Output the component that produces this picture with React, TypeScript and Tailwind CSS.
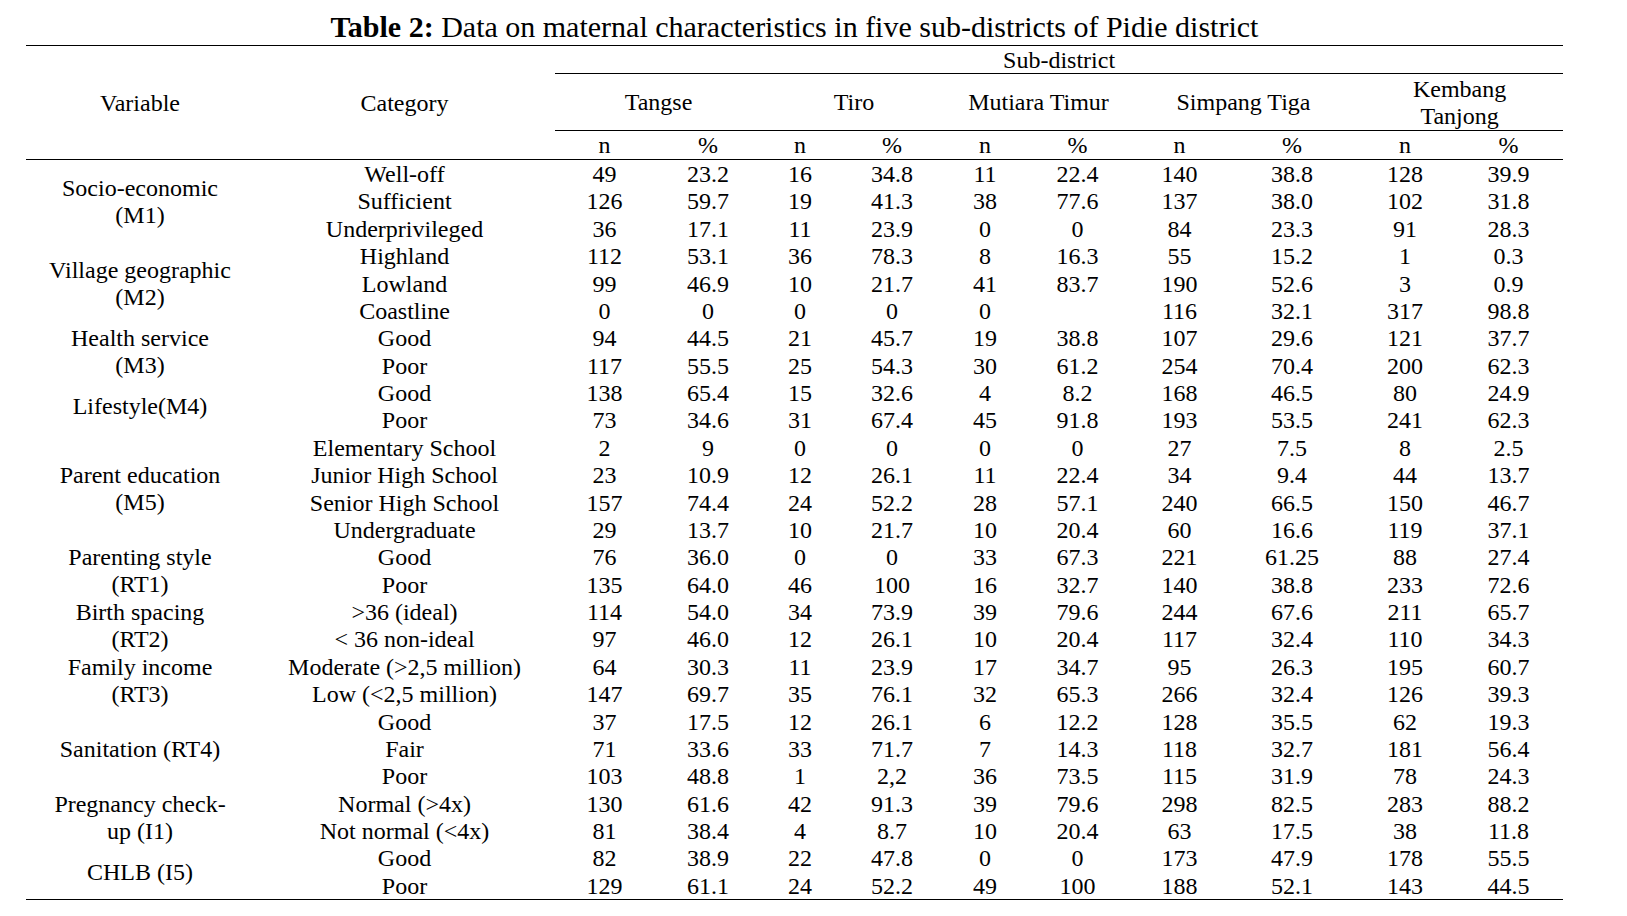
type Group = {
  label: string[];
  rows: string[][];
};

const groups: Group[] = [
  {
    label: ['Socio-economic', '(M1)'],
    rows: [
      ['Well-off', '49', '23.2', '16', '34.8', '11', '22.4', '140', '38.8', '128', '39.9'],
      ['Sufficient', '126', '59.7', '19', '41.3', '38', '77.6', '137', '38.0', '102', '31.8'],
      ['Underprivileged', '36', '17.1', '11', '23.9', '0', '0', '84', '23.3', '91', '28.3'],
    ],
  },
  {
    label: ['Village geographic', '(M2)'],
    rows: [
      ['Highland', '112', '53.1', '36', '78.3', '8', '16.3', '55', '15.2', '1', '0.3'],
      ['Lowland', '99', '46.9', '10', '21.7', '41', '83.7', '190', '52.6', '3', '0.9'],
      ['Coastline', '0', '0', '0', '0', '0', '', '116', '32.1', '317', '98.8'],
    ],
  },
  {
    label: ['Health service', '(M3)'],
    rows: [
      ['Good', '94', '44.5', '21', '45.7', '19', '38.8', '107', '29.6', '121', '37.7'],
      ['Poor', '117', '55.5', '25', '54.3', '30', '61.2', '254', '70.4', '200', '62.3'],
    ],
  },
  {
    label: ['Lifestyle(M4)'],
    rows: [
      ['Good', '138', '65.4', '15', '32.6', '4', '8.2', '168', '46.5', '80', '24.9'],
      ['Poor', '73', '34.6', '31', '67.4', '45', '91.8', '193', '53.5', '241', '62.3'],
    ],
  },
  {
    label: ['Parent education', '(M5)'],
    rows: [
      ['Elementary School', '2', '9', '0', '0', '0', '0', '27', '7.5', '8', '2.5'],
      ['Junior High School', '23', '10.9', '12', '26.1', '11', '22.4', '34', '9.4', '44', '13.7'],
      ['Senior High School', '157', '74.4', '24', '52.2', '28', '57.1', '240', '66.5', '150', '46.7'],
      ['Undergraduate', '29', '13.7', '10', '21.7', '10', '20.4', '60', '16.6', '119', '37.1'],
    ],
  },
  {
    label: ['Parenting style', '(RT1)'],
    rows: [
      ['Good', '76', '36.0', '0', '0', '33', '67.3', '221', '61.25', '88', '27.4'],
      ['Poor', '135', '64.0', '46', '100', '16', '32.7', '140', '38.8', '233', '72.6'],
    ],
  },
  {
    label: ['Birth spacing', '(RT2)'],
    rows: [
      ['>36 (ideal)', '114', '54.0', '34', '73.9', '39', '79.6', '244', '67.6', '211', '65.7'],
      ['< 36 non-ideal', '97', '46.0', '12', '26.1', '10', '20.4', '117', '32.4', '110', '34.3'],
    ],
  },
  {
    label: ['Family income', '(RT3)'],
    rows: [
      ['Moderate (>2,5 million)', '64', '30.3', '11', '23.9', '17', '34.7', '95', '26.3', '195', '60.7'],
      ['Low (<2,5 million)', '147', '69.7', '35', '76.1', '32', '65.3', '266', '32.4', '126', '39.3'],
    ],
  },
  {
    label: ['Sanitation (RT4)'],
    rows: [
      ['Good', '37', '17.5', '12', '26.1', '6', '12.2', '128', '35.5', '62', '19.3'],
      ['Fair', '71', '33.6', '33', '71.7', '7', '14.3', '118', '32.7', '181', '56.4'],
      ['Poor', '103', '48.8', '1', '2,2', '36', '73.5', '115', '31.9', '78', '24.3'],
    ],
  },
  {
    label: ['Pregnancy check-', 'up (I1)'],
    rows: [
      ['Normal (>4x)', '130', '61.6', '42', '91.3', '39', '79.6', '298', '82.5', '283', '88.2'],
      ['Not normal (<4x)', '81', '38.4', '4', '8.7', '10', '20.4', '63', '17.5', '38', '11.8'],
    ],
  },
  {
    label: ['CHLB (I5)'],
    rows: [
      ['Good', '82', '38.9', '22', '47.8', '0', '0', '173', '47.9', '178', '55.5'],
      ['Poor', '129', '61.1', '24', '52.2', '49', '100', '188', '52.1', '143', '44.5'],
    ],
  },
];

const widths = [228, 301, 99, 108, 76, 108, 78, 107, 97, 128, 98, 109];

function App() {
  const total = groups.reduce((n, g) => n + g.rows.length, 0);
  let count = 0;

  return (
    <div className="w-[1627px] h-[916px] bg-white text-black font-['Liberation_Serif',serif] pl-[26px]">
      <div className="w-[1537px] h-[45px] pt-[12px] text-center text-[30px] leading-[30px]">
        <span className="font-bold">Table 2:</span> Data on maternal characteristics in five sub-districts of Pidie district
      </div>
      <table className="table-fixed border-collapse w-[1537px] text-[24px] leading-[27.4px]">
        <colgroup>
          {widths.map((w, i) => (
            <col key={i} style={{ width: w }} />
          ))}
        </colgroup>
        <thead>
          <tr className="h-[28px] border-t border-black">
            <th rowSpan={3} className="font-normal p-0 pt-[3px] align-middle border-b border-black">
              Variable
            </th>
            <th rowSpan={3} className="font-normal p-0 pt-[3px] align-middle border-b border-black">
              Category
            </th>
            <th colSpan={10} className="font-normal p-0 pt-[1px] leading-[26px] border-b border-black">
              Sub-district
            </th>
          </tr>
          <tr className="h-[57px]">
            <th colSpan={2} className="font-normal p-0 pt-[2px] border-b border-black">Tangse</th>
            <th colSpan={2} className="font-normal p-0 pt-[2px] border-b border-black">Tiro</th>
            <th colSpan={2} className="font-normal p-0 pt-[2px] border-b border-black">Mutiara Timur</th>
            <th colSpan={2} className="font-normal p-0 pt-[2px] border-b border-black">Simpang Tiga</th>
            <th colSpan={2} className="font-normal p-0 pt-[1px] border-b border-black leading-[27px]">
              Kembang
              <br />
              Tanjong
            </th>
          </tr>
          <tr className="h-[29px]">
            {Array.from({ length: 5 }).flatMap((_, i) => [
              <th key={'n' + i} className="font-normal p-0 pt-[1px] leading-[27px] border-b border-black">n</th>,
              <th key={'p' + i} className="font-normal p-0 pt-[1px] leading-[27px] border-b border-black">%</th>,
            ])}
          </tr>
        </thead>
        <tbody>
          {groups.map((g) =>
            g.rows.map((r, ri) => {
              count++;
              const last = count === total;
              return (
                <tr key={g.label[0] + ri} className={`h-[27.37px] ${last ? 'border-b border-black' : ''}`}>
                  {ri === 0 && (
                    <td rowSpan={g.rows.length} className="p-0 pt-[1px] leading-[26.8px] text-center align-middle">
                      {g.label.map((l, li) => (
                        <div key={li}>{l}</div>
                      ))}
                    </td>
                  )}
                  {r.map((c, ci) => (
                    <td key={ci} className="p-0 pt-[2px] leading-[25.37px] text-center align-middle whitespace-nowrap">
                      {c}
                    </td>
                  ))}
                </tr>
              );
            })
          )}
        </tbody>
      </table>
    </div>
  );
}

export default App;
